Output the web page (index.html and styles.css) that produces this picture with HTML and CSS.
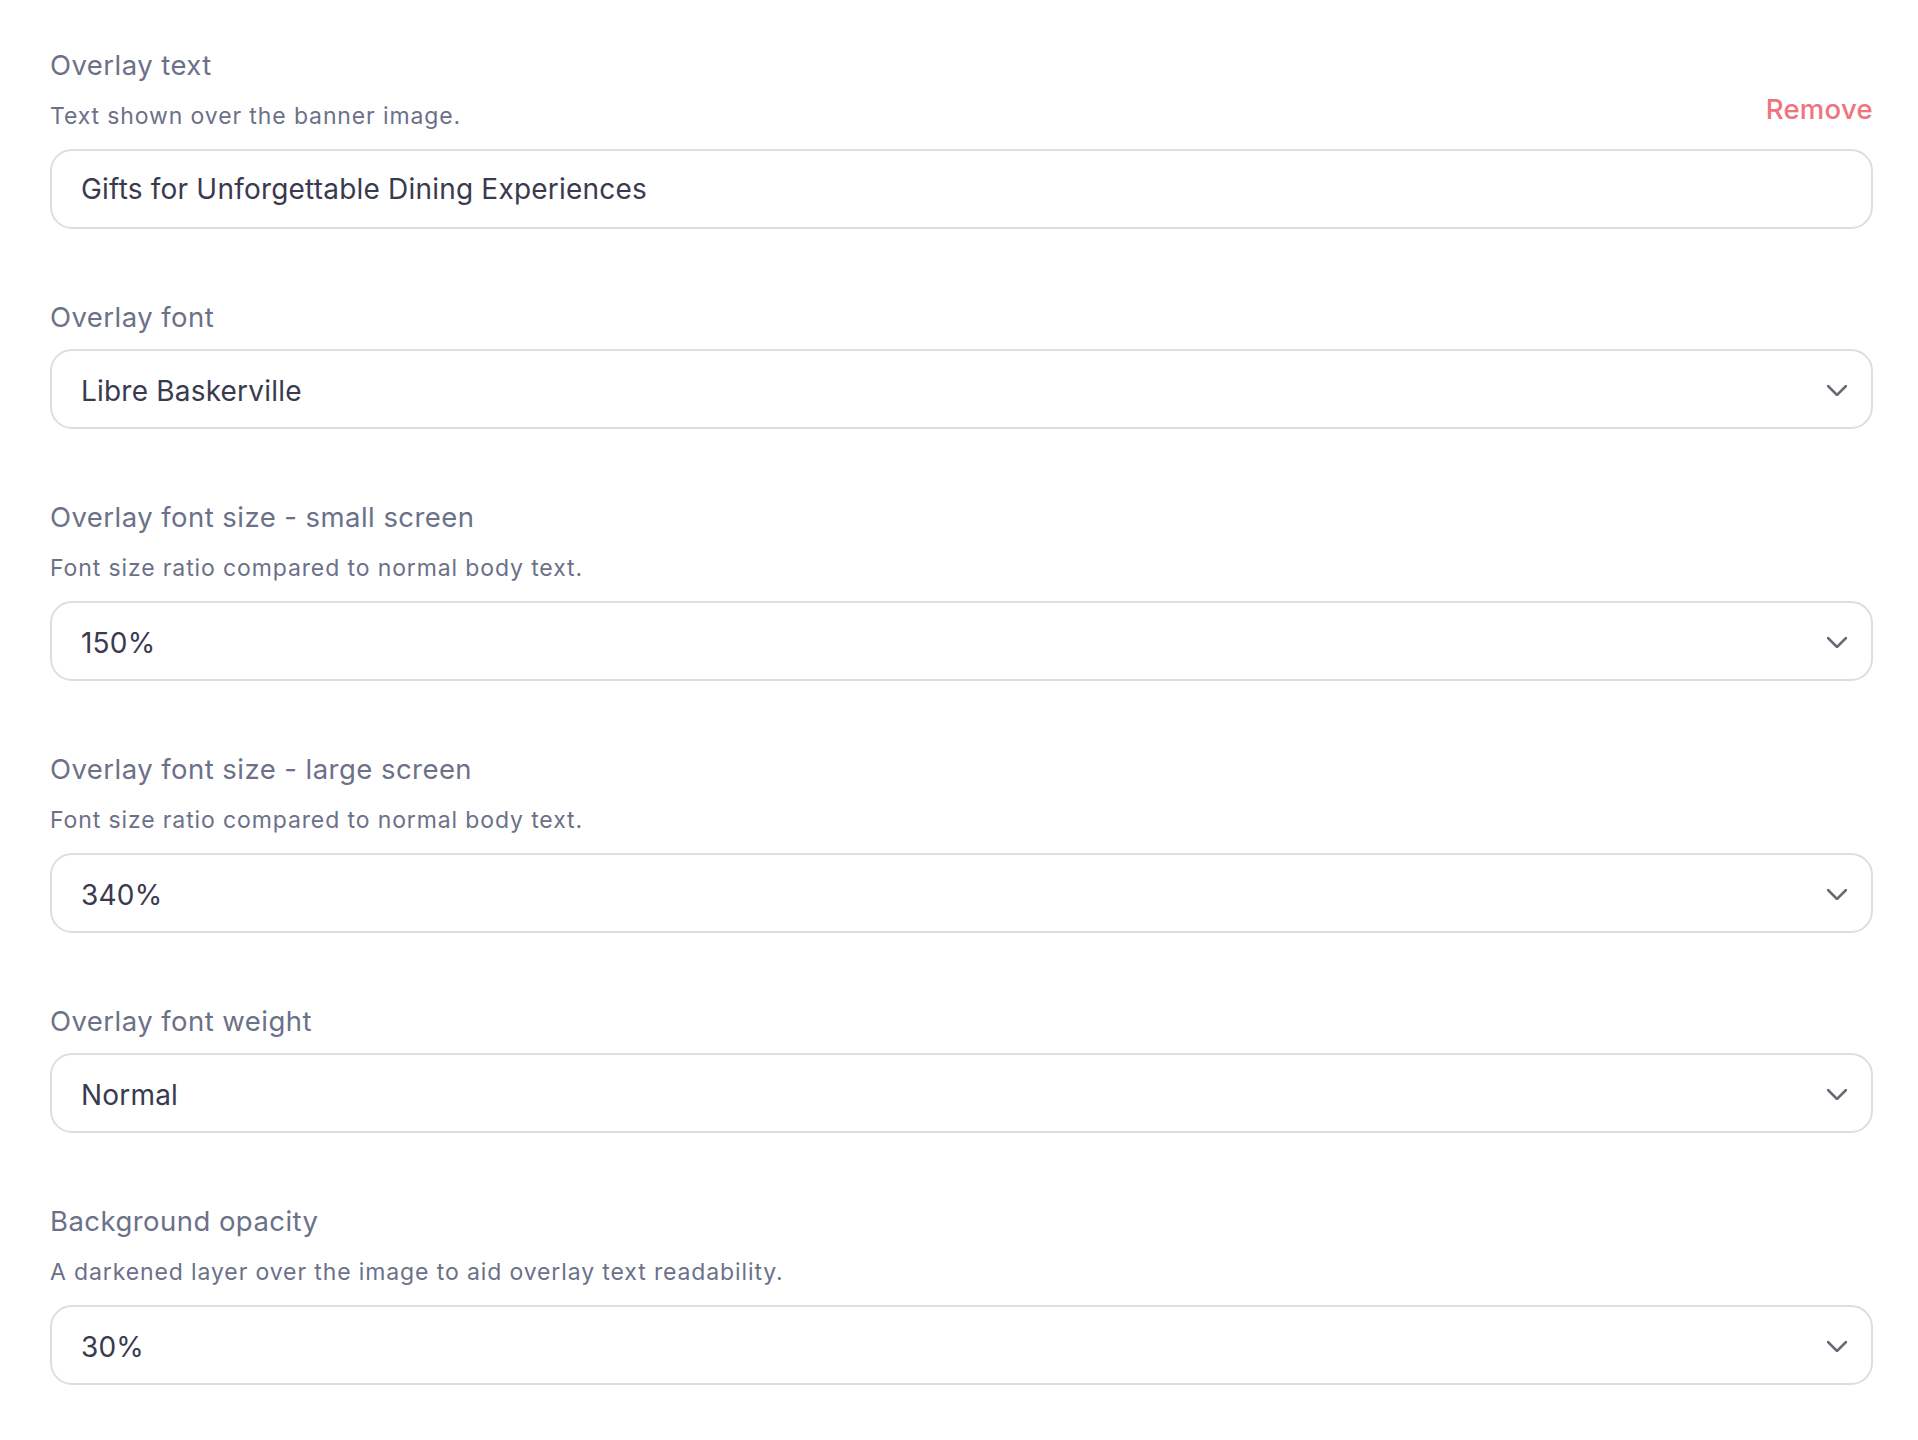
FILE: index.html
```html
<!DOCTYPE html>
<html>
<head>
<meta charset="utf-8">
<link rel="stylesheet" href="styles.css">
</head>
<body>
<div class="form">
  <div class="field">
    <div class="head">
      <div class="head-text">
        <div class="label">Overlay text</div>
        <div class="desc">Text shown over the banner image.</div>
      </div>
      <a class="remove">Remove</a>
    </div>
    <div class="input"><span class="value">Gifts for Unforgettable Dining Experiences</span></div>
  </div>

  <div class="field">
    <div class="label">Overlay font</div>
    <div class="input select"><span class="value">Libre Baskerville</span>
      <svg class="chev" viewBox="0 0 20 11" width="20" height="11"><path d="M1 1 L10 10 L19 1" fill="none" stroke="#696a77" stroke-width="2.5" stroke-linecap="round" stroke-linejoin="round"/></svg>
    </div>
  </div>

  <div class="field">
    <div class="label">Overlay font size - small screen</div>
    <div class="desc">Font size ratio compared to normal body text.</div>
    <div class="input select"><span class="value">150%</span>
      <svg class="chev" viewBox="0 0 20 11" width="20" height="11"><path d="M1 1 L10 10 L19 1" fill="none" stroke="#696a77" stroke-width="2.5" stroke-linecap="round" stroke-linejoin="round"/></svg>
    </div>
  </div>

  <div class="field">
    <div class="label">Overlay font size - large screen</div>
    <div class="desc">Font size ratio compared to normal body text.</div>
    <div class="input select"><span class="value">340%</span>
      <svg class="chev" viewBox="0 0 20 11" width="20" height="11"><path d="M1 1 L10 10 L19 1" fill="none" stroke="#696a77" stroke-width="2.5" stroke-linecap="round" stroke-linejoin="round"/></svg>
    </div>
  </div>

  <div class="field">
    <div class="label">Overlay font weight</div>
    <div class="input select"><span class="value">Normal</span>
      <svg class="chev" viewBox="0 0 20 11" width="20" height="11"><path d="M1 1 L10 10 L19 1" fill="none" stroke="#696a77" stroke-width="2.5" stroke-linecap="round" stroke-linejoin="round"/></svg>
    </div>
  </div>

  <div class="field">
    <div class="label">Background opacity</div>
    <div class="desc">A darkened layer over the image to aid overlay text readability.</div>
    <div class="input select"><span class="value">30%</span>
      <svg class="chev" viewBox="0 0 20 11" width="20" height="11"><path d="M1 1 L10 10 L19 1" fill="none" stroke="#696a77" stroke-width="2.5" stroke-linecap="round" stroke-linejoin="round"/></svg>
    </div>
  </div>
</div>
</body>
</html>
```
FILE: styles.css
```css
html, body {
  margin: 0;
  padding: 0;
  background: #ffffff;
}
body {
  font-family: Inter, "Noto Sans", sans-serif;
}
.form {
  padding: 49px 45px 0 50px;
  display: flex;
  flex-direction: column;
  gap: 72px;
}
.field {
  display: flex;
  flex-direction: column;
}
.head {
  display: flex;
  justify-content: space-between;
  align-items: flex-end;
}
.head-text {
  display: flex;
  flex-direction: column;
}
.label {
  font-size: 27.5px;
  line-height: 32px;
  color: #6b7189;
  letter-spacing: 0.45px;
  margin-bottom: 16px;
}
.desc {
  font-size: 23px;
  line-height: 30px;
  color: #6b7189;
  letter-spacing: 0.88px;
  margin-top: 4px;
  margin-bottom: 18px;
}
.remove {
  font-size: 27.5px;
  line-height: 32px;
  color: #f0737e;
  font-weight: 500;
  letter-spacing: 0.3px;
  margin-bottom: 24px;
  cursor: pointer;
}
.input {
  box-sizing: border-box;
  height: 80px;
  border: 2px solid #dcdee4;
  border-radius: 22px;
  display: flex;
  align-items: center;
  justify-content: space-between;
  padding: 0 24px 0 29px;
}
.select {
  padding-top: 3px;
}
.value {
  font-size: 28px;
  color: #3a3a4f;
  letter-spacing: 0.2px;
}
.chev {
  display: block;
}
```
